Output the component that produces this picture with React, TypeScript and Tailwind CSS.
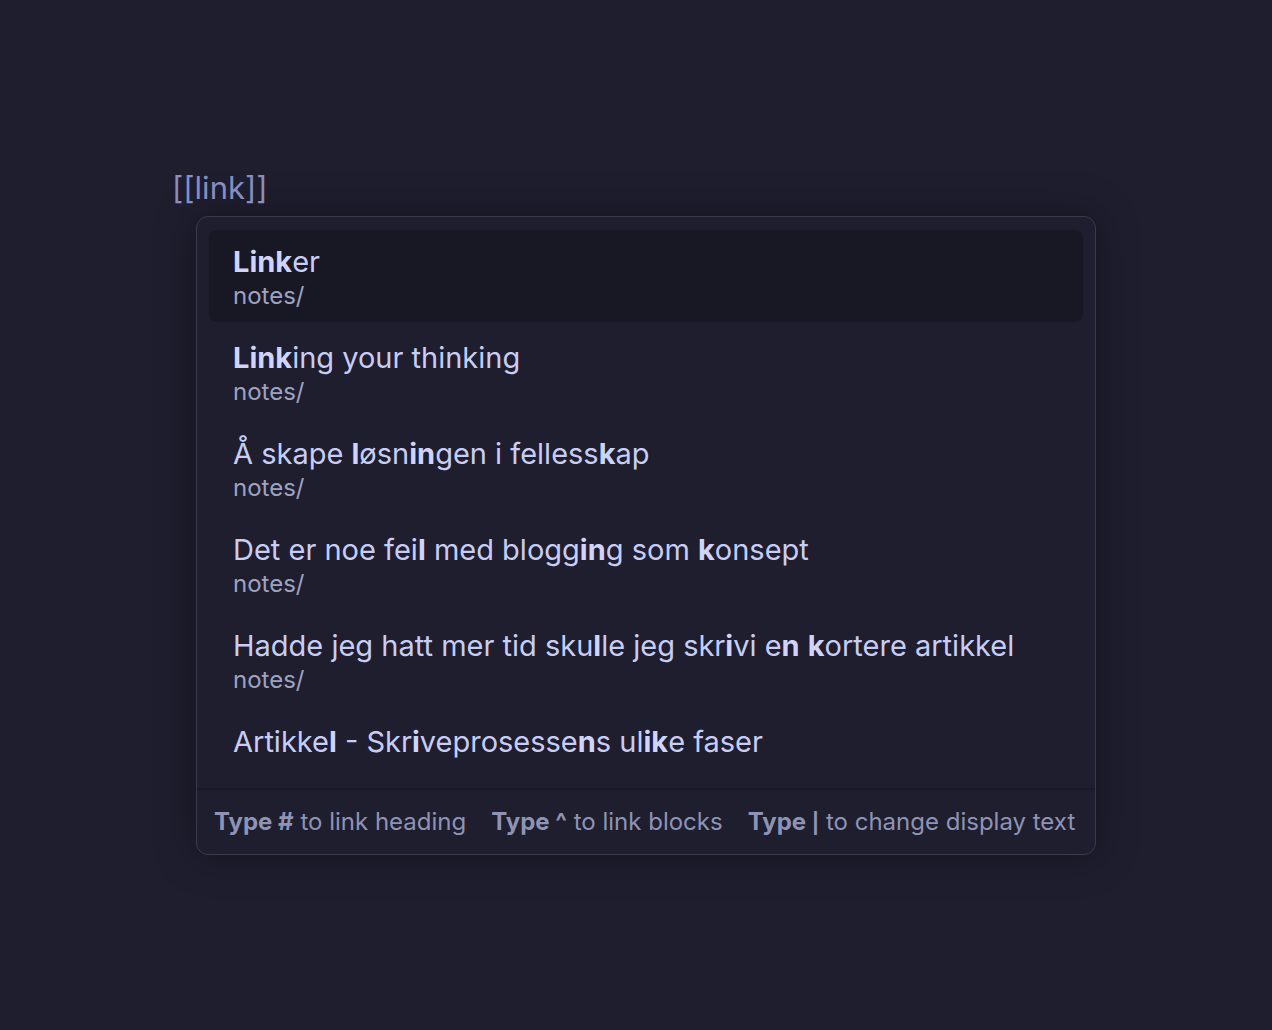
import type { FC } from "react";

type Part = { t: string; b?: boolean };
type Item = { title: Part[]; path?: string };

const items: Item[] = [
  { title: [{ t: "Link", b: true }, { t: "er" }], path: "notes/" },
  { title: [{ t: "Link", b: true }, { t: "ing your thinking" }], path: "notes/" },
  {
    title: [
      { t: "Å skape " },
      { t: "l", b: true },
      { t: "øsn" },
      { t: "in", b: true },
      { t: "gen i felless" },
      { t: "k", b: true },
      { t: "ap" },
    ],
    path: "notes/",
  },
  {
    title: [
      { t: "Det er noe fei" },
      { t: "l", b: true },
      { t: " med blogg" },
      { t: "in", b: true },
      { t: "g som " },
      { t: "k", b: true },
      { t: "onsept" },
    ],
    path: "notes/",
  },
  {
    title: [
      { t: "Hadde jeg hatt mer tid sku" },
      { t: "l", b: true },
      { t: "le jeg skr" },
      { t: "i", b: true },
      { t: "vi e" },
      { t: "n", b: true },
      { t: " " },
      { t: "k", b: true },
      { t: "ortere artikkel" },
    ],
    path: "notes/",
  },
  {
    title: [
      { t: "Artikke" },
      { t: "l", b: true },
      { t: " - Skr" },
      { t: "i", b: true },
      { t: "veprosesse" },
      { t: "n", b: true },
      { t: "s ul" },
      { t: "i", b: true },
      { t: "k", b: true },
      { t: "e faser" },
    ],
  },
];

const App: FC = () => {
  return (
    <div className="min-h-screen bg-[#1e1e2e] font-['Inter',sans-serif] pt-[166px] pl-[172px]">
      <div className="text-[31px] leading-[44px] text-[#8a8dbd]">[[link]]</div>

      {/* suggestion popup */}
      <div className="ml-[24px] mt-[6px] w-[900px] rounded-[12px] border border-[#3a3a4e] bg-[#1e1e2e] shadow-[0_0_40px_rgba(0,0,0,0.35)]">
        <div className="h-[571px] overflow-hidden px-[12px] pt-[13px] flex flex-col gap-[4px]">
          {items.map((it, i) => (
            <div
              key={i}
              className={
                "rounded-[8px] pl-[24px] pt-[13px] pb-[11px] " +
                (i === 0 ? "bg-[#181825]" : "")
              }
            >
              <div className="text-[29px] leading-[38px] text-[#c9cdf3]">
                {it.title.map((p, j) => (
                  <span key={j} className={p.b ? "font-bold text-[#d0d4fa]" : ""}>
                    {p.t}
                  </span>
                ))}
              </div>
              {it.path && (
                <div className="text-[24px] leading-[30px] text-[#9ea2c2]">{it.path}</div>
              )}
            </div>
          ))}
        </div>
        <div className="border-t-2 border-[#191926] h-[66px] px-[17px] flex items-center gap-[25px] text-[24px] text-[#8f93b4]">
          <span>
            <b className="font-bold">Type #</b> to link heading
          </span>
          <span>
            <b className="font-bold">Type ^</b> to link blocks
          </span>
          <span>
            <b className="font-bold">
              Type <span className="text-[20px]">|</span>
            </b>{" "}
            to change display text
          </span>
        </div>
      </div>
    </div>
  );
};

export default App;
